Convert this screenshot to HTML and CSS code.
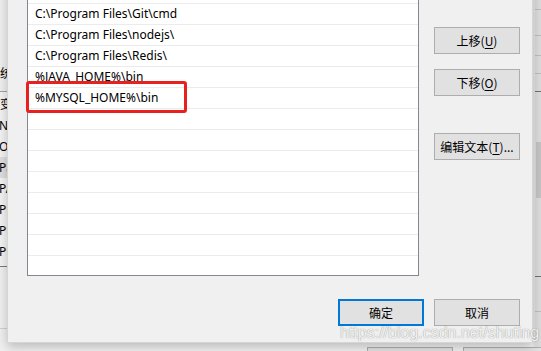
FILE: index.html
```html
<!DOCTYPE html>
<html lang="zh-CN">
<head>
    <meta charset="utf-8">
    <title>编辑环境变量</title>
    <link rel="stylesheet" href="styles.css">
</head>
<body>
    <div class="desktop">
        <!-- 后面的“环境变量”窗口，只露出一点边 -->
        <div class="bg-window">
            <div class="bg-main">
                <div class="bg-left">
                    <div class="bg-group">系统变量(S)</div>
                    <div class="bg-list">
                        <div class="bg-head">变量</div>
                        <div class="bg-row">NUMBER_OF_PROCESSORS</div>
                        <div class="bg-row">OS</div>
                        <div class="bg-row selected">Path</div>
                        <div class="bg-row">PATHEXT</div>
                        <div class="bg-row">PROCESSOR_ARCHITECTURE</div>
                        <div class="bg-row">PROCESSOR_IDENTIFIER</div>
                        <div class="bg-row">PROCESSOR_LEVEL</div>
                    </div>
                    <div class="bg-sep"></div>
                </div>
                <div class="bg-right">
                    <div class="seg s1"></div>
                    <div class="seg s2"></div>
                    <div class="seg s3"></div>
                    <div class="seg s4"></div>
                    <div class="seg s5 dark"></div>
                    <div class="track">
                        <div class="thumb"></div>
                    </div>
                    <div class="seg s6"></div>
                </div>
            </div>
            <div class="bg-footer">
                <button class="btn">确定</button>
                <button class="btn">取消</button>
            </div>
        </div>

        <!-- 编辑环境变量 对话框 -->
        <div class="dialog">
            <div class="path-list">
                <div class="path-row">%SystemRoot%\system32</div>
                <div class="path-row">%SystemRoot%\System32\OpenSSH\</div>
                <div class="path-row">C:\Program Files\Git\cmd</div>
                <div class="path-row">C:\Program Files\nodejs\</div>
                <div class="path-row">C:\Program Files\Redis\</div>
                <div class="path-row">%JAVA_HOME%\bin</div>
                <div class="path-row">%MYSQL_HOME%\bin</div>
                <div class="path-row"></div>
                <div class="path-row"></div>
                <div class="path-row"></div>
                <div class="path-row"></div>
                <div class="path-row"></div>
                <div class="path-row"></div>
                <div class="path-row"></div>
                <div class="path-row"></div>
            </div>
            <div class="side-buttons">
                <button class="btn up">上移(<u>U</u>)</button>
                <button class="btn down">下移(<u>O</u>)</button>
                <button class="btn edit">编辑文本(<u>T</u>)...</button>
            </div>
            <div class="footer">
                <button class="btn default">确定</button>
                <button class="btn">取消</button>
            </div>
            <div class="highlight"></div>
            <div class="grip"></div>
        </div>

        <div class="watermark">https://blog.csdn.net/shuting</div>
    </div>
</body>
</html>
```

FILE: styles.css
```css
* {
    box-sizing: border-box;
}
body {
    margin: 0;
    width: 541px;
    height: 351px;
    overflow: hidden;
    background: #f0f0f0;
    font-family: "Noto Sans", "Noto Sans CJK SC", sans-serif;
    font-size: 12px;
    color: #000;
}
.desktop {
    position: relative;
    width: 541px;
    height: 351px;
    overflow: hidden;
}

/* 背景窗口 */
.bg-window {
    display: flex;
    flex-direction: column;
    height: 351px;
}
.bg-main {
    flex: 1;
    display: flex;
}
.bg-left {
    flex: 1;
    padding-top: 63px;
    overflow: hidden;
}
.bg-group {
    height: 20px;
    line-height: 20px;
    margin-left: -12px;
    font-family: "Noto Sans CJK SC", sans-serif;
}
.bg-list {
    margin-top: 8px;
    height: 176px;
    border-top: 1px solid #a0a0a0;
    border-bottom: 1px solid #7a7a7a;
    background: #f3f3f3;
}
.bg-head {
    height: 23px;
    line-height: 23px;
    font-family: "Noto Sans CJK SC", sans-serif;
}
.bg-row {
    height: 21px;
    line-height: 21px;
    margin-left: -1px;
}
.bg-row.selected {
    background: #dedede;
}
.bg-sep {
    margin-top: 61px;
    border-top: 1px solid #cfcfcf;
}
.bg-right {
    width: 8px;
    display: flex;
    flex-direction: column;
    background: #dcdcdc;
    border-left: 2px solid #e6e6e6;
}
.seg {
    border-bottom: 1px solid #bdbdbd;
}
.seg.dark {
    border-bottom-color: #707070;
}
.s1 { height: 10px; }
.s2 { height: 26px; }
.s3 { height: 20px; }
.s4 { height: 18px; }
.s5 { height: 18px; }
.s6 { height: 35px; }
.track {
    height: 185px;
    padding-top: 50px;
    border-bottom: 1px solid #707070;
}
.thumb {
    height: 56px;
    margin-left: 1px;
    background: #c4c4c4;
}
.bg-footer {
    height: 4px;
    display: flex;
    justify-content: flex-end;
    gap: 10px;
    margin-right: -8px;
}

/* 按钮 */
.btn {
    width: 86px;
    height: 27px;
    padding: 0;
    border: 1px solid #adadad;
    background: #e1e1e1;
    font-family: "Noto Sans CJK SC", sans-serif;
    font-size: 12px;
    color: #000;
    flex-shrink: 0;
}
.btn u {
    text-decoration-thickness: 1px;
    text-underline-offset: 2px;
}
.btn.default {
    border: 2px solid #0078d7;
}

/* 对话框 */
.dialog {
    position: absolute;
    left: 7px;
    top: -60px;
    width: 526px;
    height: 403px;
    display: grid;
    grid-template-columns: 392px 86px;
    grid-template-rows: 315px 27px;
    column-gap: 15px;
    row-gap: 23px;
    padding: 20px 14px 18px 19px;
    background: #f0f0f0;
    border: 1px solid #d6d6d6;
    box-shadow: 0 4px 10px rgba(0, 0, 0, 0.22);
}
.path-list {
    border: 1px solid #828790;
    background: #fff;
    overflow: hidden;
}
.path-row {
    height: 21px;
    line-height: 20px;
    padding-left: 7px;
    border-bottom: 1px solid #ececec;
    white-space: nowrap;
}
.side-buttons {
    display: flex;
    flex-direction: column;
}
.side-buttons .up {
    margin-top: 66px;
}
.side-buttons .down {
    margin-top: 15px;
}
.side-buttons .edit {
    margin-top: 37px;
}
.footer {
    grid-column: 1 / 3;
    display: flex;
    justify-content: flex-end;
    gap: 10px;
}

/* 红框标注 */
.highlight {
    position: absolute;
    left: 18px;
    top: 140px;
    width: 161px;
    height: 32px;
    border: 3px solid #e8201e;
    border-radius: 3px;
}
.grip {
    position: absolute;
    right: 2px;
    bottom: 3px;
    width: 5px;
    height: 7px;
    background-image: radial-gradient(#b5b5b5 45%, transparent 50%);
    background-size: 2px 2px;
}

.watermark {
    position: absolute;
    left: 340px;
    top: 324px;
    font-family: "Liberation Sans", sans-serif;
    font-size: 16px;
    color: rgba(255, 255, 255, 0.9);
    text-shadow: 0 0 1px rgba(0, 0, 0, 0.5);
    white-space: nowrap;
}
```
